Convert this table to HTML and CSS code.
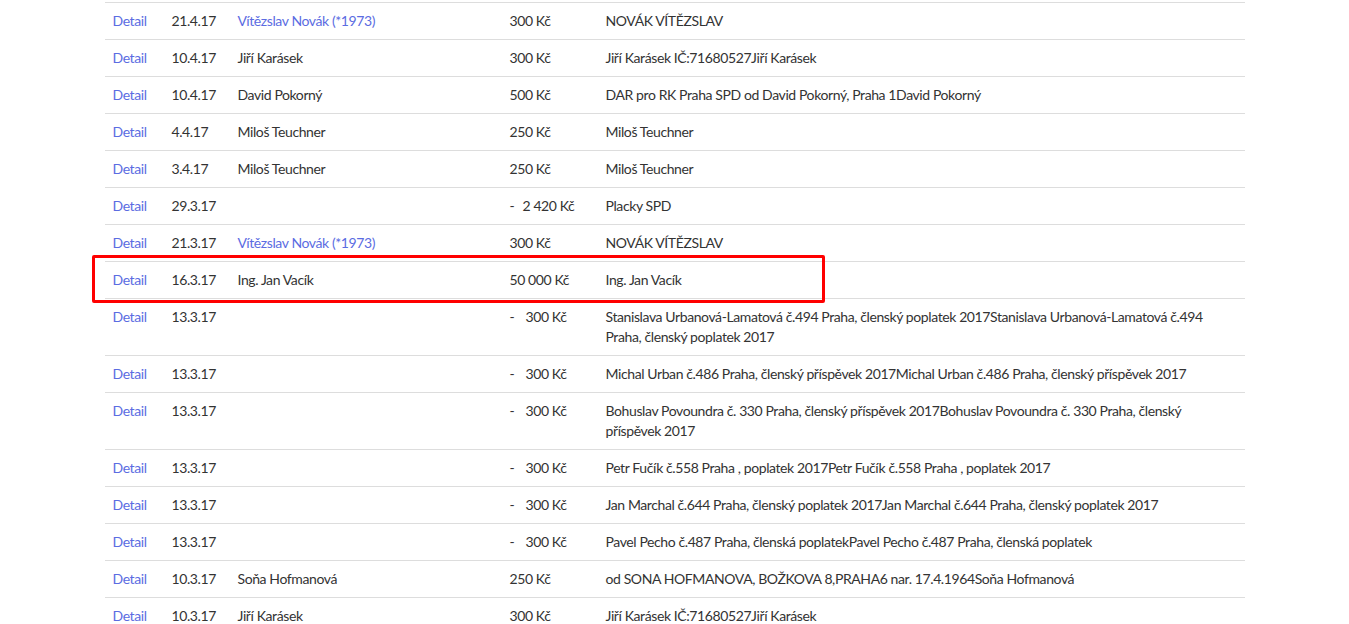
FILE: index.html
```html
<!DOCTYPE html>
<html lang="cs">
<head>
<meta charset="utf-8">
<title>Transakce</title>
<link rel="stylesheet" href="styles.css">
</head>
<body>
<div class="container">
  <table class="tx">
    <colgroup>
      <col class="c-detail"><col class="c-date"><col class="c-name"><col class="c-amount"><col class="c-msg">
    </colgroup>
    <tbody>
      <tr><td><a href="#">Detail</a></td><td>21.4.17</td><td><a href="#">Vítězslav Novák (*1973)</a></td><td>300 Kč</td><td>NOVÁK VÍTĚZSLAV</td></tr>
      <tr><td><a href="#">Detail</a></td><td>10.4.17</td><td>Jiří Karásek</td><td>300 Kč</td><td>Jiří Karásek IČ:71680527Jiří Karásek</td></tr>
      <tr><td><a href="#">Detail</a></td><td>10.4.17</td><td>David Pokorný</td><td>500 Kč</td><td>DAR pro RK Praha SPD od David Pokorný, Praha 1David Pokorný</td></tr>
      <tr><td><a href="#">Detail</a></td><td>4.4.17</td><td>Miloš Teuchner</td><td>250 Kč</td><td>Miloš Teuchner</td></tr>
      <tr><td><a href="#">Detail</a></td><td>3.4.17</td><td>Miloš Teuchner</td><td>250 Kč</td><td>Miloš Teuchner</td></tr>
      <tr><td><a href="#">Detail</a></td><td>29.3.17</td><td></td><td><span class="neg">-</span><span class="n2">2 420 Kč</span></td><td>Placky SPD</td></tr>
      <tr><td><a href="#">Detail</a></td><td>21.3.17</td><td><a href="#">Vítězslav Novák (*1973)</a></td><td>300 Kč</td><td>NOVÁK VÍTĚZSLAV</td></tr>
      <tr><td><a href="#">Detail</a></td><td>16.3.17</td><td>Ing. Jan Vacík</td><td>50 000 Kč</td><td>Ing. Jan Vacík</td></tr>
      <tr><td><a href="#">Detail</a></td><td>13.3.17</td><td></td><td><span class="neg">-</span><span class="n3">300 Kč</span></td><td>Stanislava Urbanová-Lamatová č.494 Praha, členský poplatek 2017Stanislava Urbanová-Lamatová č.494 Praha, členský poplatek 2017</td></tr>
      <tr><td><a href="#">Detail</a></td><td>13.3.17</td><td></td><td><span class="neg">-</span><span class="n3">300 Kč</span></td><td>Michal Urban č.486 Praha, členský příspěvek 2017Michal Urban č.486 Praha, členský příspěvek 2017</td></tr>
      <tr><td><a href="#">Detail</a></td><td>13.3.17</td><td></td><td><span class="neg">-</span><span class="n3">300 Kč</span></td><td>Bohuslav Povoundra č. 330 Praha, členský příspěvek 2017Bohuslav Povoundra č. 330 Praha, členský příspěvek 2017</td></tr>
      <tr><td><a href="#">Detail</a></td><td>13.3.17</td><td></td><td><span class="neg">-</span><span class="n3">300 Kč</span></td><td>Petr Fučík č.558 Praha , poplatek 2017Petr Fučík č.558 Praha , poplatek 2017</td></tr>
      <tr><td><a href="#">Detail</a></td><td>13.3.17</td><td></td><td><span class="neg">-</span><span class="n3">300 Kč</span></td><td>Jan Marchal č.644 Praha, členský poplatek 2017Jan Marchal č.644 Praha, členský poplatek 2017</td></tr>
      <tr><td><a href="#">Detail</a></td><td>13.3.17</td><td></td><td><span class="neg">-</span><span class="n3">300 Kč</span></td><td>Pavel Pecho č.487 Praha, členská poplatekPavel Pecho č.487 Praha, členská poplatek</td></tr>
      <tr><td><a href="#">Detail</a></td><td>10.3.17</td><td>Soňa Hofmanová</td><td>250 Kč</td><td>od SONA HOFMANOVA, BOŽKOVA 8,PRAHA6 nar. 17.4.1964Soňa Hofmanová</td></tr>
      <tr><td><a href="#">Detail</a></td><td>10.3.17</td><td>Jiří Karásek</td><td>300 Kč</td><td>Jiří Karásek IČ:71680527Jiří Karásek</td></tr>
    </tbody>
  </table>
  <div class="highlight"></div>
</div>
</body>
</html>
```
FILE: styles.css
```css
html, body {
  margin: 0;
  padding: 0;
  background: #fff;
  overflow: hidden;
}
body {
  font-family: "Source Sans Pro", Lato, "Noto Sans", sans-serif;
  font-size: 14px;
  line-height: 20px;
  letter-spacing: -0.4px;
  color: #333;
}
a {
  color: #5b6ce2;
  text-decoration: none;
}
.container {
  position: relative;
  width: 1140px;
  margin: 0 auto;
  padding-top: 2px;
}
.tx {
  width: 100%;
  table-layout: fixed;
  border-collapse: collapse;
}
.c-detail { width: 59px; }
.c-date { width: 66px; }
.c-name { width: 272px; }
.c-amount { width: 96px; }
.tx td {
  border-top: 1px solid #ddd;
  padding: 8px;
  vertical-align: top;
  text-align: left;
}
.neg { display: inline-block; width: 6px; }
.n2 { margin-left: 7px; }
.n3 { margin-left: 10px; }
.highlight {
  position: absolute;
  left: -13px;
  top: 255px;
  width: 733px;
  height: 48px;
  box-sizing: border-box;
  border: 3px solid #f00;
  border-radius: 2px;
}
```
